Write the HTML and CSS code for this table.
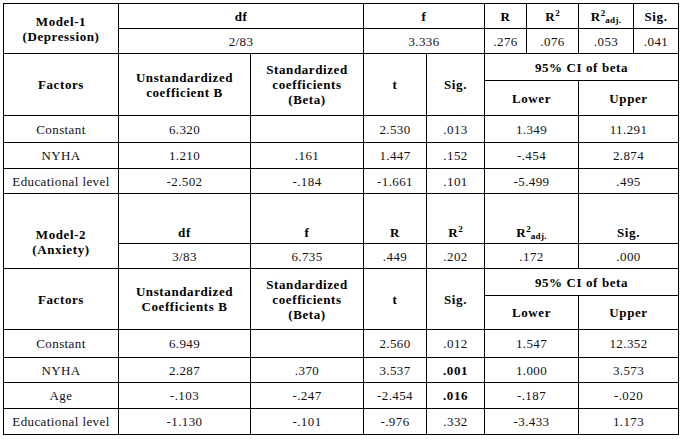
FILE: index.html
```html
<!DOCTYPE html>
<html lang="en">

<head>
    <meta charset="UTF-8">
    <meta name="viewport" content="width=device-width, initial-scale=1.0">
    <title>Regression models</title>
    <link rel="stylesheet" href="styles.css">
</head>

<body>
    <table class="stats-table">
        <colgroup>
            <col class="c1">
            <col class="c2">
            <col class="c3">
            <col class="c4">
            <col class="c5">
            <col class="c6">
            <col class="c7">
            <col class="c8">
            <col class="c9">
        </colgroup>
        <!-- Model 1 -->
        <tr class="row-25">
            <th rowspan="2" class="model">Model-1<br>(Depression)</th>
            <th colspan="2">df</th>
            <th colspan="2">f</th>
            <th>R</th>
            <th>R<sup>2</sup></th>
            <th>R<sup>2</sup><sub>adj.</sub></th>
            <th>Sig.</th>
        </tr>
        <tr class="row-25">
            <td colspan="2">2/83</td>
            <td colspan="2">3.336</td>
            <td>.276</td>
            <td>.076</td>
            <td>.053</td>
            <td>.041</td>
        </tr>
        <tr class="row-27">
            <th rowspan="2">Factors</th>
            <th rowspan="2">Unstandardized<br>coefficient B</th>
            <th rowspan="2">Standardized<br>coefficients<br>(Beta)</th>
            <th rowspan="2">t</th>
            <th rowspan="2">Sig.</th>
            <th colspan="4">95% CI of beta</th>
        </tr>
        <tr class="row-35">
            <th colspan="2">Lower</th>
            <th colspan="2">Upper</th>
        </tr>
        <tr class="row-27">
            <td>Constant</td>
            <td>6.320</td>
            <td></td>
            <td>2.530</td>
            <td>.013</td>
            <td colspan="2">1.349</td>
            <td colspan="2">11.291</td>
        </tr>
        <tr class="row-26">
            <td>NYHA</td>
            <td>1.210</td>
            <td>.161</td>
            <td>1.447</td>
            <td>.152</td>
            <td colspan="2">-.454</td>
            <td colspan="2">2.874</td>
        </tr>
        <tr class="row-25">
            <td>Educational level</td>
            <td>-2.502</td>
            <td>-.184</td>
            <td>-1.661</td>
            <td>.101</td>
            <td colspan="2">-5.499</td>
            <td colspan="2">.495</td>
        </tr>
        <!-- Model 2 -->
        <tr class="row-50 low">
            <th rowspan="2" class="model model-low">Model-2<br>(Anxiety)</th>
            <th>df</th>
            <th>f</th>
            <th>R</th>
            <th>R<sup>2</sup></th>
            <th colspan="2">R<sup>2</sup><sub>adj.</sub></th>
            <th colspan="2">Sig.</th>
        </tr>
        <tr class="row-25">
            <td>3/83</td>
            <td>6.735</td>
            <td>.449</td>
            <td>.202</td>
            <td colspan="2">.172</td>
            <td colspan="2">.000</td>
        </tr>
        <tr class="row-27">
            <th rowspan="2">Factors</th>
            <th rowspan="2">Unstandardized<br>Coefficients B</th>
            <th rowspan="2">Standardized<br>coefficients<br>(Beta)</th>
            <th rowspan="2">t</th>
            <th rowspan="2">Sig.</th>
            <th colspan="4">95% CI of beta</th>
        </tr>
        <tr class="row-34">
            <th colspan="2">Lower</th>
            <th colspan="2">Upper</th>
        </tr>
        <tr class="row-28">
            <td>Constant</td>
            <td>6.949</td>
            <td></td>
            <td>2.560</td>
            <td>.012</td>
            <td colspan="2">1.547</td>
            <td colspan="2">12.352</td>
        </tr>
        <tr class="row-25">
            <td>NYHA</td>
            <td>2.287</td>
            <td>.370</td>
            <td>3.537</td>
            <td><b>.001</b></td>
            <td colspan="2">1.000</td>
            <td colspan="2">3.573</td>
        </tr>
        <tr class="row-26">
            <td>Age</td>
            <td>-.103</td>
            <td>-.247</td>
            <td>-2.454</td>
            <td><b>.016</b></td>
            <td colspan="2">-.187</td>
            <td colspan="2">-.020</td>
        </tr>
        <tr class="row-26">
            <td>Educational level</td>
            <td>-1.130</td>
            <td>-.101</td>
            <td>-.976</td>
            <td>.332</td>
            <td colspan="2">-3.433</td>
            <td colspan="2">1.173</td>
        </tr>
    </table>
</body>

</html>
```

FILE: styles.css
```css
body {
    margin: 0;
    padding: 3px 0 0 3px;
    background-color: white;
    font-family: "Liberation Serif", "Times New Roman", serif;
    font-size: 13px;
    color: #000;
}

.stats-table {
    border-collapse: collapse;
    table-layout: fixed;
    width: 676px;
    font-family: "Liberation Serif", "Times New Roman", serif;
    font-size: 13px;
}

.stats-table th,
.stats-table td {
    border: 1px solid #000;
    padding: 0 1px;
    text-align: center;
    vertical-align: middle;
    line-height: 15px;
    letter-spacing: 0.4px;
    color: #111;
    white-space: nowrap;
    overflow: hidden;
}

.stats-table th {
    font-weight: bold;
    letter-spacing: 0.6px;
    color: #000;
}

.stats-table b {
    letter-spacing: 0.6px;
    color: #000;
}

.model {
    line-height: 17px;
}

.stats-table .low th {
    vertical-align: bottom;
    padding-bottom: 3px;
}

.stats-table .low .model-low {
    padding-bottom: 11px;
}

sup {
    font-size: 9px;
    line-height: 0;
    vertical-align: 5px;
    letter-spacing: 0;
}

sub {
    font-size: 9px;
    line-height: 0;
    vertical-align: -2px;
    letter-spacing: 0.3px;
}

.c1 { width: 115px; }
.c2 { width: 132px; }
.c3 { width: 113px; }
.c4 { width: 63px; }
.c5 { width: 58px; }
.c6 { width: 42px; }
.c7 { width: 52px; }
.c8 { width: 55px; }
.c9 { width: 45px; }

.row-25 { height: 25px; }
.row-26 { height: 26px; }
.row-27 { height: 27px; }
.row-28 { height: 28px; }
.row-34 { height: 34px; }
.row-35 { height: 35px; }
.row-50 { height: 50px; }
```
